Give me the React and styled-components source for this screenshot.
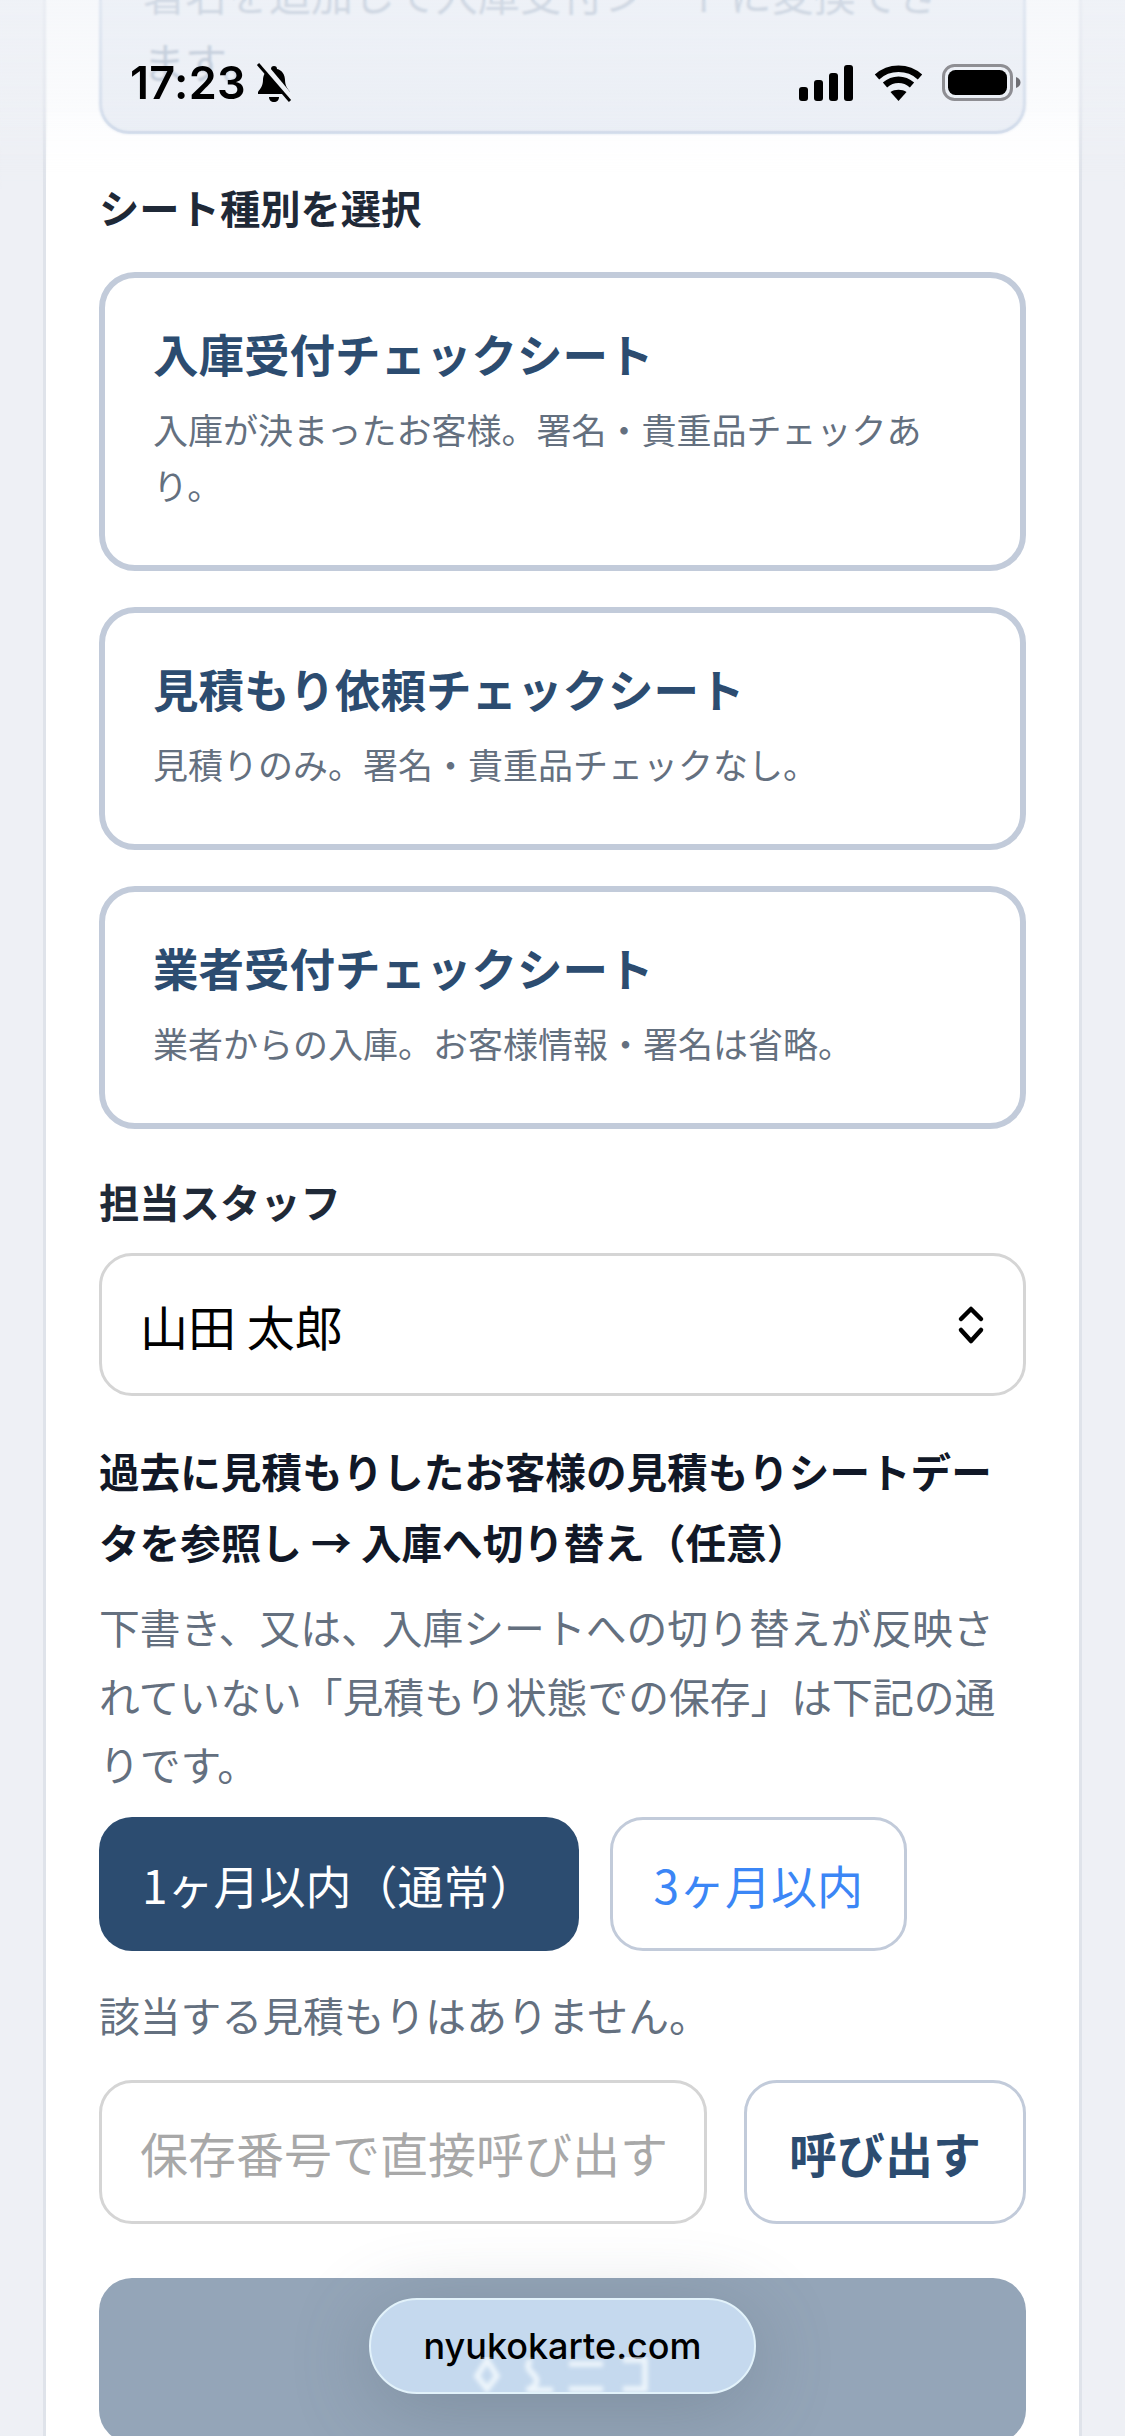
import React from "react";
import styled, { createGlobalStyle } from "styled-components";

const GlobalStyle = createGlobalStyle`
  html, body { margin: 0; padding: 0; background: #eef0f5; }
  body { font-family: "Noto Sans CJK JP", "Noto Sans", sans-serif; }
  * { box-sizing: border-box; }
`;

const Screen = styled.div`
  position: relative;
  width: 1125px;
  height: 2436px;
  overflow: hidden;
  background: #eef0f5;
`;

const Sheet = styled.main`
  width: 1039px;
  height: 2436px;
  margin-left: 43px;
  padding: 0 53px;
  background: #fff;
  border-left: 3px solid #dfe3ea;
  border-right: 3px solid #dfe3ea;
`;

const Notice = styled.div`
  height: 134px;
  padding: 0 60px 0 41px;
  display: flex;
  flex-direction: column;
  justify-content: flex-end;
  overflow: hidden;
  background: #eaeef5;
  border: 3px solid #c8d4e6;
  border-top: 0;
  border-radius: 0 0 30px 30px;
`;

const NoticeText = styled.p`
  margin: 0 0 36px;
  font-size: 42px;
  line-height: 68px;
  color: #a3b2c6;
`;

const Label = styled.h2`
  margin: ${(p) => p.$top}px 0 ${(p) => p.$bottom}px;
  font-size: 40.3px;
  line-height: 56px;
  font-weight: 700;
  color: #1f2937;
`;

const SheetCard = styled.button`
  display: block;
  width: 100%;
  margin-bottom: 36px;
  padding: 43px 48px 52px;
  text-align: left;
  background: #fff;
  border: 6px solid #c2cbda;
  border-radius: 36px;
  font-family: inherit;
`;

const CardTitle = styled.div`
  font-size: 45.5px;
  line-height: 64px;
  font-weight: 700;
  color: #2c4c70;
`;

const CardText = styled.div`
  margin-top: 16px;
  font-size: 35px;
  line-height: 56px;
  color: #64707f;
`;

const StaffSelect = styled.div`
  display: flex;
  align-items: center;
  justify-content: space-between;
  height: 143px;
  padding: 0 37px 0 38px;
  border: 3px solid #d5d5d5;
  border-radius: 33px;
  font-size: 48px;
  color: #000;
`;

const Heading = styled.h3`
  margin: 39px 0 0;
  font-size: 40.6px;
  line-height: 71px;
  font-weight: 700;
  color: #111827;
`;

const Muted = styled.p`
  margin: ${(p) => p.$top}px 0 0;
  font-size: 40.8px;
  line-height: 68.5px;
  color: #64707f;
`;

const Ranges = styled.div`
  display: flex;
  gap: 31px;
  margin-top: 18px;
`;

const RangeButton = styled.button`
  height: 134px;
  padding: 0 ${(p) => (p.$active ? 43 : 41)}px;
  font-family: inherit;
  font-size: 46px;
  color: ${(p) => (p.$active ? "#fff" : "#3b86f6")};
  background: ${(p) => (p.$active ? "#2c4c70" : "#fff")};
  border: ${(p) => (p.$active ? "0" : "3px solid #c2cbda")};
  border-radius: 33px;
`;

const LookupRow = styled.div`
  display: flex;
  gap: 37px;
  margin-top: 31px;
`;

const LookupInput = styled.div`
  flex: 1;
  min-width: 0;
  display: flex;
  align-items: center;
  height: 144px;
  padding: 0 38px;
  border: 3px solid #d5d5d5;
  border-radius: 33px;
  font-size: 48px;
  color: #a8a8a8;
  white-space: nowrap;
`;

const LookupButton = styled.button`
  flex: none;
  width: 282px;
  height: 144px;
  font-family: inherit;
  font-size: 48px;
  font-weight: 700;
  color: #2c4c70;
  background: #fff;
  border: 3px solid #c2cbda;
  border-radius: 33px;
`;

const SubmitBar = styled.div`
  height: 165px;
  margin-top: 54px;
  background: #94a5b8;
  border-radius: 33px;
`;

const StatusFade = styled.div`
  position: absolute;
  inset: 0 0 auto 0;
  height: 190px;
  background: linear-gradient(rgba(240, 243, 248, 0.6), rgba(240, 243, 248, 0.3) 60%, rgba(255, 255, 255, 0));
  backdrop-filter: blur(1px);
  mask-image: linear-gradient(#000 55%, transparent);
`;

const StatusBar = styled.div`
  position: absolute;
  inset: 0 0 auto 0;
  padding: 60px 104px 0 130px;
  display: flex;
  justify-content: space-between;
  align-items: flex-start;
`;

const StatusLeft = styled.div`
  display: flex;
  align-items: center;
  gap: 10px;
`;

const Clock = styled.span`
  font-family: "Inter", "Liberation Sans", sans-serif;
  font-size: 45px;
  line-height: 46px;
  font-weight: 600;
  letter-spacing: 0.3px;
  color: #000;
`;

const StatusRight = styled.div`
  display: flex;
  align-items: center;
  gap: 19px;
  margin-top: 4px;
`;

const UrlPill = styled.div`
  position: absolute;
  left: 369px;
  top: 2298px;
  width: 387px;
  height: 96px;
  display: flex;
  align-items: center;
  justify-content: center;
  overflow: hidden;
  background: #c5d9ee;
  border: 2px solid #e2f2fa;
  border-radius: 48px;
  font-family: "Inter", "Liberation Sans", sans-serif;
  font-size: 36px;
  font-weight: 500;
  color: #000;
`;

const PillShadow = styled.div`
  position: absolute;
  left: 369px;
  top: 2298px;
  width: 387px;
  height: 96px;
  border-radius: 48px;
  box-shadow: 0 14px 80px rgba(80, 95, 110, 0.32);
`;

const PillGlow = styled.svg`
  position: absolute;
  left: 100px;
  bottom: 0;
`;

const Chevrons = () => (
  <svg width="30" height="42" viewBox="0 0 30 42" fill="none" stroke="#000" strokeWidth="4.5" strokeLinecap="round" strokeLinejoin="round">
    <path d="M5 15 15 5l10 10" />
    <path d="M5 26l10 11 10-11" />
  </svg>
);

const BellOff = () => (
  <svg width="36" height="40" viewBox="0 0 36 40">
    <path d="M18 3c-2 0-3 1-3 3-5 1-8 6-8 11 0 6-3 9-5 12v2h32v-2c-2-3-5-6-5-12 0-5-3-10-8-11 0-2-1-3-3-3z" fill="#000" />
    <path d="M13 34h10c0 3-2 5-5 5s-5-2-5-5z" fill="#000" />
    <path d="M6 0l30 36" stroke="#eef1f6" strokeWidth="6" />
    <path d="M2 1l32 37" stroke="#000" strokeWidth="3" />
  </svg>
);

const Signal = () => (
  <svg width="56" height="36" viewBox="0 0 56 36" fill="#000">
    <rect x="0" y="22" width="9" height="14" rx="3" />
    <rect x="15" y="15" width="9" height="21" rx="3" />
    <rect x="30" y="8" width="9" height="28" rx="3" />
    <rect x="45" y="0" width="9" height="36" rx="3" />
  </svg>
);

const Wifi = () => (
  <svg width="49" height="36" viewBox="0 0 49 36" fill="none" stroke="#000" strokeWidth="6.5">
    <path d="M3 12C15 1 34 1 46 12" />
    <path d="M11 20c8-7 19-7 27 0" />
    <path d="M24.5 36l-8-9c4-3 12-3 16 0z" fill="#000" stroke="none" />
  </svg>
);

const Battery = () => (
  <svg width="79" height="37" viewBox="0 0 79 37">
    <rect x="1.5" y="1.5" width="68" height="34" rx="11" fill="none" stroke="#8e8e93" strokeWidth="3" />
    <rect x="6" y="6" width="59" height="25" rx="7.5" fill="#000" />
    <path d="M74 13c3 1 4.5 3 4.5 5.500s-1.500 4.500-4.500 5.500z" fill="#6f6f74" />
  </svg>
);

// the white bar label showing through the glass pill, blurred
const Refraction = () => (
  <PillGlow width="190" height="36" viewBox="0 0 190 36" fill="none" stroke="#eef6fc" strokeWidth="5.5" aria-hidden="true">
    <defs>
      <filter id="glassBlur"><feGaussianBlur stdDeviation="2" /></filter>
    </defs>
    <g filter="url(#glassBlur)">
      <path d="M16 4 6 20l10 13 10-13z" />
      <path d="M60 4c-6 6-2 10 2 14s8 10-6 16h26" />
      <path d="M98 8h34M98 33h34" />
      <path d="M152 4h22v29h-22" />
    </g>
  </PillGlow>
);

export default function App() {
  return (
    <Screen>
      <GlobalStyle />
      <Sheet>
        <Notice>
          <NoticeText>署名を追加して入庫受付シートに変換できます。</NoticeText>
        </Notice>
        <Label $top={45} $bottom={37}>シート種別を選択</Label>
        <SheetCard>
          <CardTitle>入庫受付チェックシート</CardTitle>
          <CardText>入庫が決まったお客様。署名・貴重品チェックあり。</CardText>
        </SheetCard>
        <SheetCard>
          <CardTitle>見積もり依頼チェックシート</CardTitle>
          <CardText>見積りのみ。署名・貴重品チェックなし。</CardText>
        </SheetCard>
        <SheetCard>
          <CardTitle>業者受付チェックシート</CardTitle>
          <CardText>業者からの入庫。お客様情報・署名は省略。</CardText>
        </SheetCard>
        <Label $top={44} $bottom={24}>担当スタッフ</Label>
        <StaffSelect>
          <span>山田 太郎</span>
          <Chevrons />
        </StaffSelect>
        <Heading>過去に見積もりしたお客様の見積もりシートデータを参照し → 入庫へ切り替え（任意）</Heading>
        <Muted $top={16}>下書き、又は、入庫シートへの切り替えが反映されていない「見積もり状態での保存」は下記の通りです。</Muted>
        <Ranges>
          <RangeButton $active>1ヶ月以内（通常）</RangeButton>
          <RangeButton>3ヶ月以内</RangeButton>
        </Ranges>
        <Muted $top={30}>該当する見積もりはありません。</Muted>
        <LookupRow>
          <LookupInput>保存番号で直接呼び出す</LookupInput>
          <LookupButton>呼び出す</LookupButton>
        </LookupRow>
        <SubmitBar />
      </Sheet>
      <StatusFade />
      <StatusBar>
        <StatusLeft>
          <Clock>17:23</Clock>
          <BellOff />
        </StatusLeft>
        <StatusRight>
          <Signal />
          <Wifi />
          <Battery />
        </StatusRight>
      </StatusBar>
      <PillShadow />
      <UrlPill>
        nyukokarte.com
        <Refraction />
      </UrlPill>
    </Screen>
  );
}
